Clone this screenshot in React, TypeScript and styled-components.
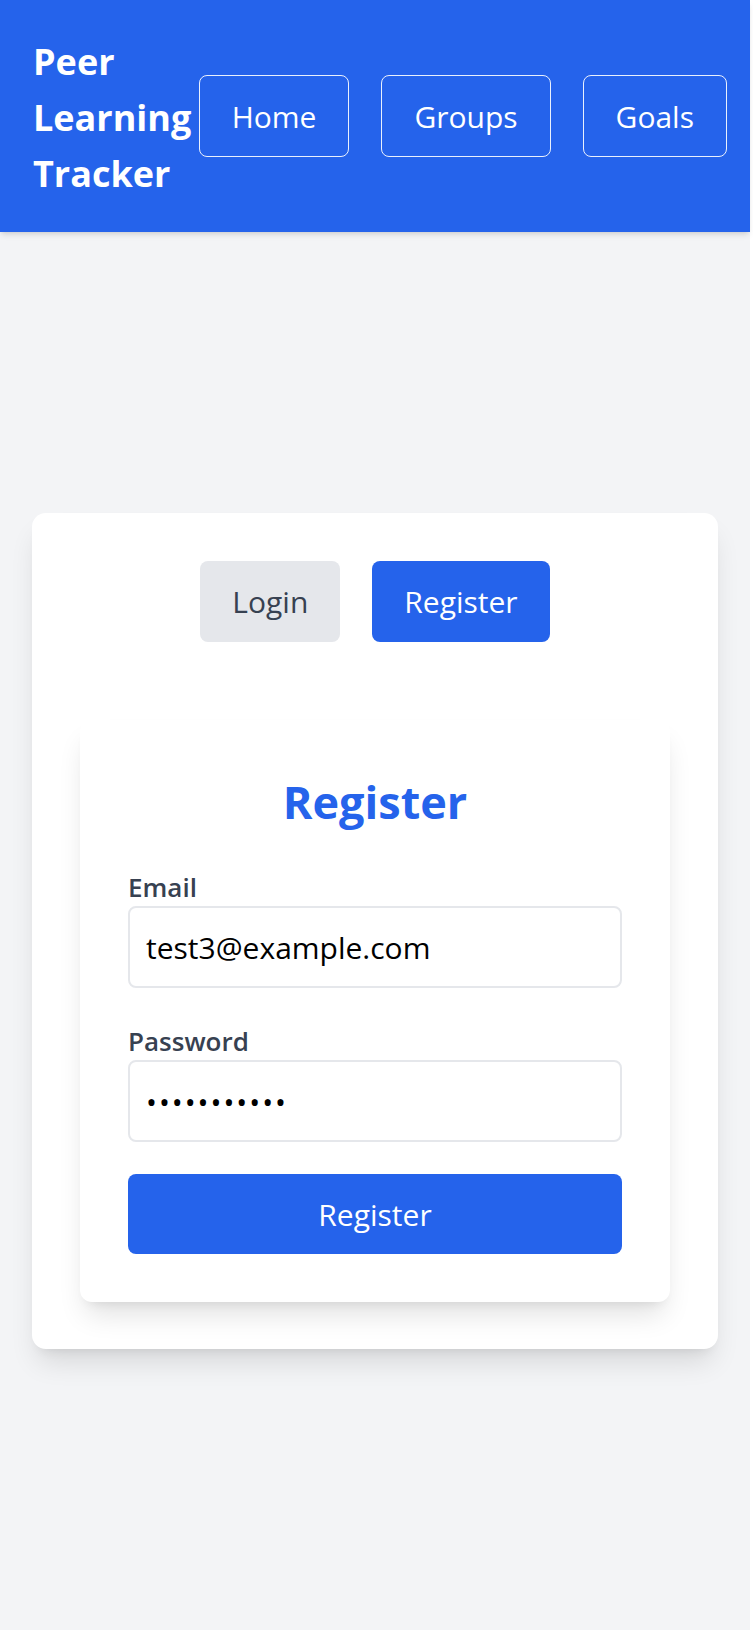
import { useState } from "react";
import styled, { createGlobalStyle } from "styled-components";

const GlobalStyle = createGlobalStyle`
  html,
  body {
    margin: 0;
    padding: 0;
    background: #ffffff;
  }

  * {
    box-sizing: border-box;
  }

  body {
    font-family: "Open Sans", "Noto Sans", Arial, sans-serif;
  }
`;

const Page = styled.div`
  width: 750px;
  min-height: 1630px;
  background-color: #f3f4f6;
  display: flex;
  flex-direction: column;
`;

const Header = styled.header`
  height: 232px;
  display: flex;
  align-items: center;
  padding: 0 23px 0 33px;
  background-color: #2563eb;
  color: white;
  box-shadow: 0 4px 6px -1px rgba(0, 0, 0, 0.1), 0 2px 4px -2px rgba(0, 0, 0, 0.1);
  position: relative;
  z-index: 1;
`;

const Brand = styled.h1`
  flex: 1;
  min-width: 0;
  margin: 4px 0 0;
  font-size: 36px;
  line-height: 56px;
  font-weight: 700;
`;

const Nav = styled.nav`
  display: flex;
  gap: 32px;
  flex-shrink: 0;
`;

const NavButton = styled.button`
  height: 82px;
  padding: 0 32px;
  background: transparent;
  color: white;
  border: 1.5px solid rgba(255, 255, 255, 0.9);
  border-radius: 8px;
  font-family: inherit;
  font-size: 30px;
  cursor: pointer;
`;

const Main = styled.main`
  flex: 1;
  display: flex;
  align-items: center;
  justify-content: center;
  padding: 0 32px;
`;

const Card = styled.div`
  width: 100%;
  padding: 48px 48px 47px;
  background: white;
  border-radius: 14px;
  box-shadow: 0 18px 28px -6px rgba(0, 0, 0, 0.12), 0 8px 12px -8px rgba(0, 0, 0, 0.1);
`;

const Tabs = styled.div`
  display: flex;
  justify-content: center;
  gap: 32px;
  margin-bottom: 78px;
`;

const TabButton = styled.button<{ $active?: boolean }>`
  height: 81px;
  padding: 0 32px;
  border: none;
  border-radius: 8px;
  font-family: inherit;
  font-size: 30px;
  cursor: pointer;
  background-color: ${(p) => (p.$active ? "#2563eb" : "#e5e7eb")};
  color: ${(p) => (p.$active ? "white" : "#374151")};
`;

const FormCard = styled.form`
  padding: 48px;
  background: white;
  border-radius: 12px;
  box-shadow: 0 18px 28px -6px rgba(0, 0, 0, 0.12), 0 8px 12px -8px rgba(0, 0, 0, 0.1);
  display: flex;
  flex-direction: column;
`;

const Title = styled.h2`
  margin: 0 0 33px;
  text-align: center;
  color: #2563eb;
  font-size: 45px;
  line-height: 68px;
  font-weight: 700;
`;

const Field = styled.div<{ $gap?: number }>`
  display: flex;
  flex-direction: column;
  margin-bottom: ${(p) => p.$gap ?? 0}px;
`;

const Label = styled.label`
  margin-bottom: 1px;
  color: #374151;
  font-size: 26px;
  line-height: 36px;
  font-weight: 600;
`;

const Input = styled.input`
  width: 100%;
  height: 82px;
  padding: 0 16px;
  border: 2px solid #e5e7eb;
  border-radius: 8px;
  font-family: inherit;
  font-size: 30px;
  color: #000000;
  background: white;
  outline: none;

  &[type="password"] {
    font-size: 29px;
    letter-spacing: 2px;
  }
`;

const SubmitButton = styled.button`
  height: 80px;
  border: none;
  border-radius: 8px;
  background-color: #2563eb;
  color: white;
  font-family: inherit;
  font-size: 30px;
  cursor: pointer;
`;

export default function App() {
  const [mode, setMode] = useState<"login" | "register">("register");

  return (
    <>
      <GlobalStyle />
      <Page>
        <Header>
          <Brand>Peer Learning Tracker</Brand>
          <Nav>
            <NavButton>Home</NavButton>
            <NavButton>Groups</NavButton>
            <NavButton>Goals</NavButton>
          </Nav>
        </Header>

        <Main>
          <Card>
            <Tabs>
              <TabButton $active={mode === "login"} onClick={() => setMode("login")}>
                Login
              </TabButton>
              <TabButton $active={mode === "register"} onClick={() => setMode("register")}>
                Register
              </TabButton>
            </Tabs>

            <FormCard onSubmit={(e) => e.preventDefault()}>
              <Title>{mode === "register" ? "Register" : "Login"}</Title>
              <Field $gap={35}>
                <Label>Email</Label>
                <Input type="email" defaultValue="test3@example.com" />
              </Field>
              <Field $gap={32}>
                <Label>Password</Label>
                <Input type="password" defaultValue="password123" />
              </Field>
              <SubmitButton type="submit">
                {mode === "register" ? "Register" : "Login"}
              </SubmitButton>
            </FormCard>
          </Card>
        </Main>
      </Page>
    </>
  );
}
